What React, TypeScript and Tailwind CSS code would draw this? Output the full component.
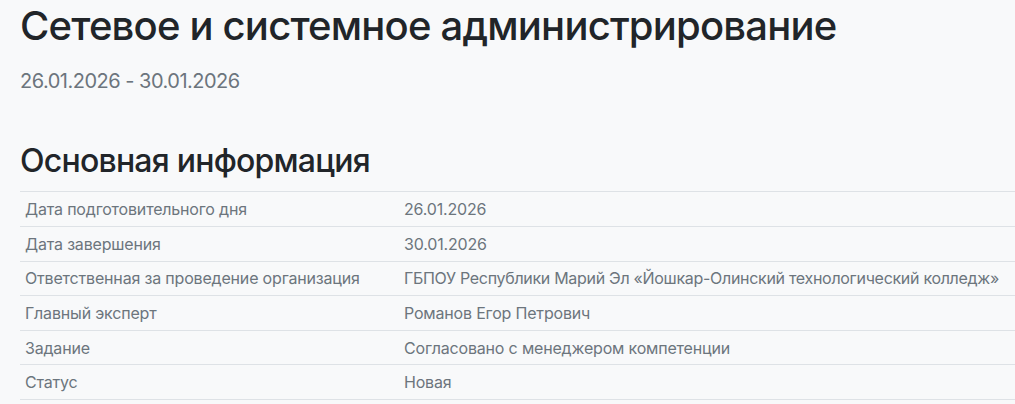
export default function App() {
  const rows: [string, string][] = [
    ["Дата подготовительного дня", "26.01.2026"],
    ["Дата завершения", "30.01.2026"],
    ["Ответственная за проведение организация", "ГБПОУ Республики Марий Эл «Йошкар-Олинский технологический колледж»"],
    ["Главный эксперт", "Романов Егор Петрович"],
    ["Задание", "Согласовано с менеджером компетенции"],
    ["Статус", "Новая"],
  ];
  return (
    <div className="min-h-[404px] bg-[#f8f9fa] pl-5 pt-[2px] font-['Inter',sans-serif] text-[#212529]">
      <h1 className="text-[40px] leading-[1.2] font-medium tracking-[-0.8px] mb-[16px]">Сетевое и системное администрирование</h1>
      <div className="text-[20px] leading-[1.5] tracking-[-0.5px] text-[#6c757d]">26.01.2026 - 30.01.2026</div>
      <h2 className="mt-[46px] text-[32px] leading-[1.2] font-medium tracking-[-0.78px] mb-[11px]">Основная информация</h2>
      <div className="border-t border-[#dee2e6] text-[16px] leading-[24px] tracking-[-0.18px] text-[#6c757d]">
        {rows.map(([k, v]) => (
          <div key={k} className="grid grid-cols-[379px_1fr] border-b border-[#dee2e6]">
            <div className="px-[5px] py-[4.8px]">{k}</div>
            <div className={"px-[5px] py-[4.8px] whitespace-nowrap " + (v.length > 40 ? "tracking-[-0.3px]" : "")}>{v}</div>
          </div>
        ))}
      </div>
    </div>
  );
}
